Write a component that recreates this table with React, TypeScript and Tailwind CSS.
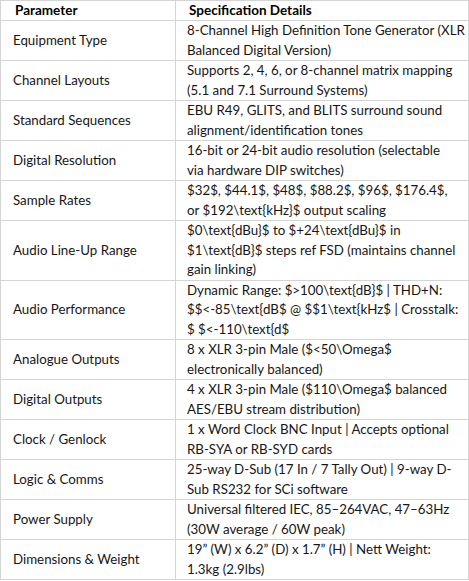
import React from "react";

type SpecRow = {
  param: string;
  lines: string[];
};

const ROWS: SpecRow[] = [
  {
    param: "Equipment Type",
    lines: ["8-Channel High Definition Tone Generator (XLR", "Balanced Digital Version)"],
  },
  {
    param: "Channel Layouts",
    lines: ["Supports 2, 4, 6, or 8-channel matrix mapping", "(5.1 and 7.1 Surround Systems)"],
  },
  {
    param: "Standard Sequences",
    lines: ["EBU R49, GLITS, and BLITS surround sound", "alignment/identification tones"],
  },
  {
    param: "Digital Resolution",
    lines: ["16-bit or 24-bit audio resolution (selectable", "via hardware DIP switches)"],
  },
  {
    param: "Sample Rates",
    lines: ["$32$, $44.1$, $48$, $88.2$, $96$, $176.4$,", "or $192\\text{kHz}$ output scaling"],
  },
  {
    param: "Audio Line-Up Range",
    lines: [
      "$0\\text{dBu}$ to $+24\\text{dBu}$ in",
      "$1\\text{dB}$ steps ref FSD (maintains channel",
      "gain linking)",
    ],
  },
  {
    param: "Audio Performance",
    lines: [
      "Dynamic Range: $>100\\text{dB}$ | THD+N:",
      "$$<-85\\text{dB$ @ $$1\\text{kHz$ | Crosstalk:",
      "$ $<-110\\text{d$",
    ],
  },
  {
    param: "Analogue Outputs",
    lines: ["8 x XLR 3-pin Male ($<50\\Omega$", "electronically balanced)"],
  },
  {
    param: "Digital Outputs",
    lines: ["4 x XLR 3-pin Male ($110\\Omega$ balanced", "AES/EBU stream distribution)"],
  },
  {
    param: "Clock / Genlock",
    lines: ["1 x Word Clock BNC Input | Accepts optional", "RB-SYA or RB-SYD cards"],
  },
  {
    param: "Logic & Comms",
    lines: ["25-way D-Sub (17 In / 7 Tally Out) | 9-way D-", "Sub RS232 for SCi software"],
  },
  {
    param: "Power Supply",
    lines: ["Universal filtered IEC, 85\u2013264VAC, 47\u201363Hz", "(30W average / 60W peak)"],
  },
  {
    param: "Dimensions & Weight",
    lines: ["19\u201d (W) x 6.2\u201d (D) x 1.7\u201d (H) | Nett Weight:", "1.3kg (2.9lbs)"],
  },
];

export default function App() {
  return (
    <div className="w-[469px] bg-white font-['Lato','Open_Sans',sans-serif] text-[13.3px] text-[#161616]">
      <table className="w-[469px] table-fixed border-collapse">
        <colgroup>
          <col className="w-[175px]" />
          <col />
        </colgroup>
        <thead>
          <tr>
            <th className="border border-[#d4d4d4] pl-[14px] text-left align-middle text-[13.5px] font-bold leading-[19px] text-black">
              Parameter
            </th>
            <th className="border border-[#d4d4d4] pl-[13px] text-left align-middle text-[13.5px] font-bold leading-[19px] text-black">
              Specification Details
            </th>
          </tr>
        </thead>
        <tbody>
          {ROWS.map((row) => (
            <tr key={row.param}>
              <td className="border border-[#d4d4d4] pl-[12px] align-middle leading-[19.5px]">
                {row.param}
              </td>
              <td className="whitespace-nowrap border border-[#d4d4d4] pl-[11px] align-middle leading-[19.5px]">
                {row.lines.map((line, i) => (
                  <React.Fragment key={i}>
                    {i > 0 ? <br /> : null}
                    {line}
                  </React.Fragment>
                ))}
              </td>
            </tr>
          ))}
        </tbody>
      </table>
    </div>
  );
}
